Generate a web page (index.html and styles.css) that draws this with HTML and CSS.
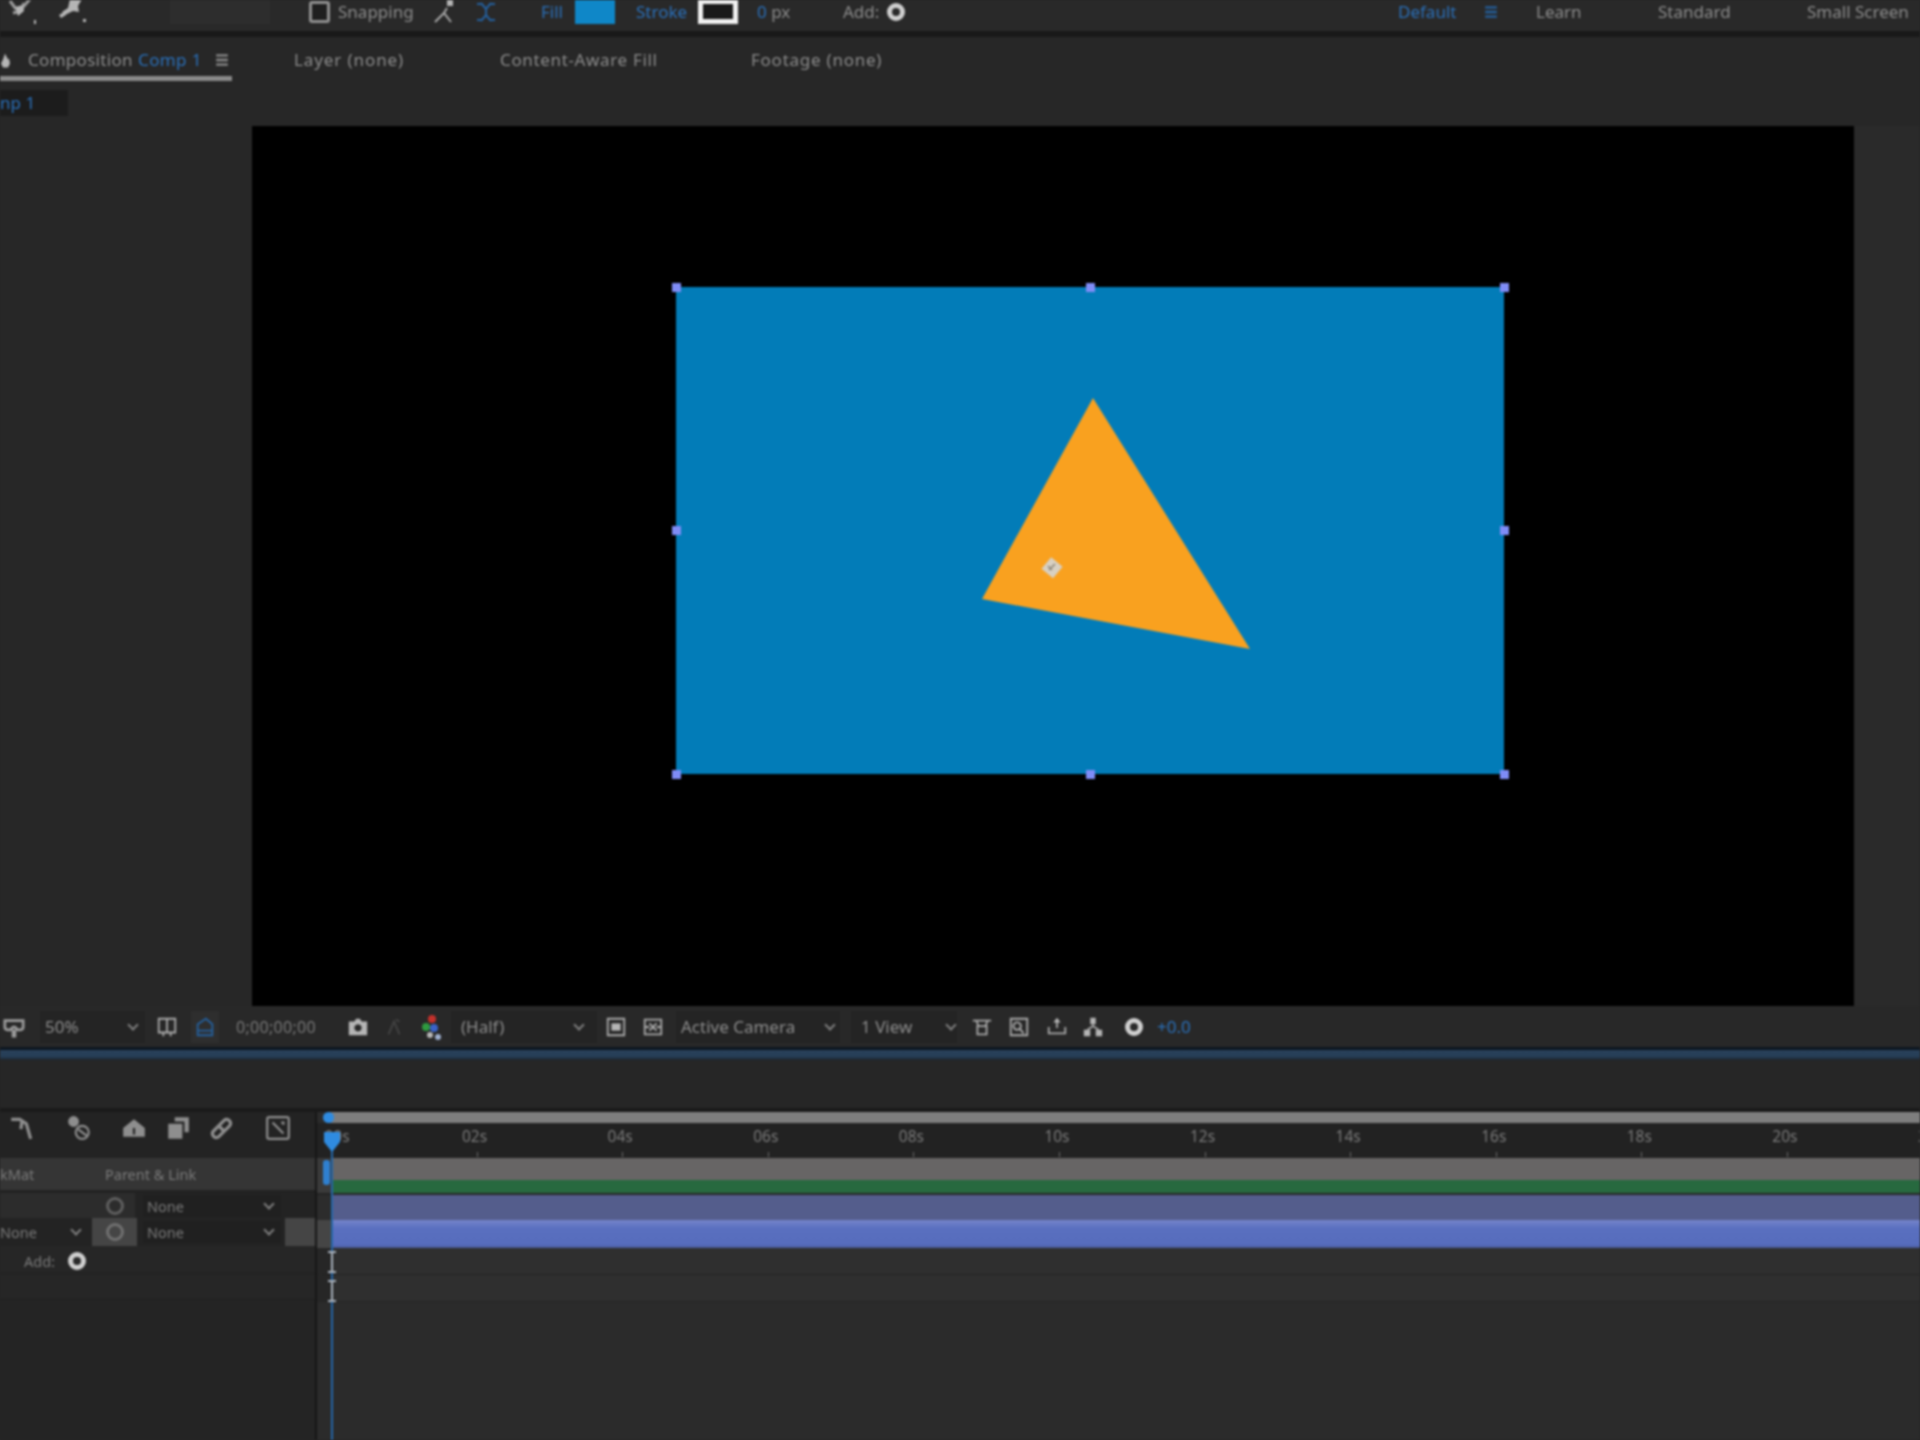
FILE: index.html
```html
<!DOCTYPE html>
<html lang="en">
<head>
<meta charset="utf-8">
<title>Composition Comp 1</title>
<link rel="stylesheet" href="styles.css">
</head>
<body>
<div class="app">
  <header class="toolbar">
    <svg class="ic tb-pen" viewBox="0 0 30 30"><path class="thick" d="M4 2l6 8M7 14l8-2 3-8M12 14L24 0"/><path class="solid" d="M9 8l8-2 1 6-6 5zM28 21h4v4h-4z"/></svg>
    <svg class="ic tb-pin" viewBox="0 0 30 30"><path class="solid" d="M14 0h12l-4 7 1 6-6-1-8 4-3-3 6-4zM3 16l5-3 2 3-5 3zM27 20h3v3h-3z"/></svg>
    <div class="tb-dim"></div>
    <span class="check"></span>
    <span class="t tb-snap">Snapping</span>
    <svg class="ic tb-snap1" viewBox="0 0 24 24"><path d="M3 22l9-9 7 9M12 13l3-5"/><path class="solid" d="M15 0h6v6h-6z"/></svg>
    <svg class="ic blue tb-snap2" viewBox="0 0 24 24"><path d="M7 3l5 6 5-6M7 21l5-6 5 6M12 9v6M3 4h5M16 4h5M3 20h5M16 20h5"/></svg>
    <span class="t blue-t tb-fill">Fill</span>
    <span class="swatch-fill"></span>
    <span class="t blue-t tb-stroke">Stroke</span>
    <span class="swatch-stroke"></span>
    <span class="t tb-px"><span class="blue-t">0</span> px</span>
    <span class="t tb-add">Add:</span>
    <span class="gear tb-gear"></span>
    <span class="t blue-t tb-default">Default</span>
    <svg class="ic blue tb-menu" viewBox="0 0 12 12"><path d="M1 2h10M1 6h10M1 10h10"/></svg>
    <span class="t tb-learn">Learn</span>
    <span class="t tb-standard">Standard</span>
    <span class="t tb-small">Small Screen</span>
  </header>
  <div class="toolbar-edge"></div>

  <section class="panel-head">
    <nav class="tabs">
      <div class="tab tab-active">
        <svg class="flame" viewBox="0 0 10 14"><path d="M4 0l3 6 1-1 1 5-2 4H2L0 10l2-4z"/></svg>
        <span class="t tab-comp">Composition</span>
        <span class="t blue-t tab-name">Comp 1</span>
        <svg class="ic tab-menu" viewBox="0 0 12 12"><path d="M1 2h10M1 6h10M1 10h10"/></svg>
      </div>
      <span class="t tab tab-layer">Layer (none)</span>
      <span class="t tab tab-fill">Content-Aware Fill</span>
      <span class="t tab tab-footage">Footage (none)</span>
    </nav>
    <div class="subtab"><span class="t blue-t">np 1</span></div>
  </section>

  <section class="stage">
    <div class="stage-side stage-left"></div>
    <svg class="canvas" viewBox="0 0 1602 880">
      <rect class="solid-blue" x="424" y="161" width="828" height="487"/>
      <polygon class="tri" points="841,272 730,473 998,523"/>
      <rect class="anchor" x="793" y="434" width="15" height="15" transform="rotate(40 800 441)"/>
      <path class="anchor-mark" d="M797 444l6-6M796 440l4 4"/>
      <g class="handles">
        <rect x="420" y="157" width="9" height="9"/><rect x="834" y="157" width="9" height="9"/><rect x="1248" y="157" width="9" height="9"/>
        <rect x="420" y="400" width="9" height="9"/><rect x="1248" y="400" width="9" height="9"/>
        <rect x="420" y="644" width="9" height="9"/><rect x="834" y="644" width="9" height="9"/><rect x="1248" y="644" width="9" height="9"/>
      </g>
    </svg>
    <div class="stage-side stage-right"></div>
  </section>

  <section class="viewer-bar">
    <svg class="ic vb-mask" viewBox="0 0 24 24"><path class="thick" d="M2 5h20v7c0 2-1 3-3 3h-3l-3-3h-2l-3 3H5c-2 0-3-1-3-3zM11 15v7h2v-7"/></svg>
    <div class="drop vb-zoom"><span class="t">50%</span><i class="chev"></i></div>
    <svg class="ic vb-safe" viewBox="0 0 24 24"><path d="M3 3h18v15H3zM12 3v15M8 18v4M16 18v4"/></svg>
    <div class="vb-blue-wrap"><svg class="ic blue" viewBox="0 0 24 24"><path d="M4 21V9l9-6 7 6v12zM4 16h16"/></svg></div>
    <span class="t vb-time">0;00;00;00</span>
    <svg class="ic vb-cam" viewBox="0 0 24 24"><path class="solid" d="M2 6h6l2-3h4l2 3h6v15H2zM12 9a4 4 0 1 0 .01 0z"/></svg>
    <svg class="ic dim vb-snapshot" viewBox="0 0 24 24"><path d="M6 20l6-14 6 14M14 4l4 2"/></svg>
    <svg class="vb-rgb" viewBox="0 0 22 28"><circle cx="11" cy="6" r="4" fill="#c2312b"/><circle cx="5" cy="14" r="4" fill="#2f9a3f"/><circle cx="13" cy="15" r="4" fill="#3a62c8"/><circle cx="17" cy="24" r="3" fill="#9fb0d0"/><circle cx="9" cy="22" r="3" fill="#b7b7b7"/></svg>
    <div class="drop vb-half"><span class="t">(Half)</span><i class="chev"></i></div>
    <svg class="ic vb-i1" viewBox="0 0 24 24"><path d="M3 3h18v18H3z"/><path class="solid" d="M7 8h10v8H7z"/></svg>
    <svg class="ic vb-i2" viewBox="0 0 24 24"><path d="M3 4h18v16H3zM8 8l8 8M16 8l-8 8M3 12h5M16 12h5"/></svg>
    <div class="drop vb-cam-drop"><span class="t">Active Camera</span><i class="chev"></i></div>
    <div class="drop vb-view"><span class="t">1 View</span><i class="chev"></i></div>
    <svg class="ic vb-i3" viewBox="0 0 24 24"><path d="M2 5h20M6 5l2 6M18 5l-2 6M7 11h10v9H7z"/></svg>
    <svg class="ic vb-i4" viewBox="0 0 24 24"><path d="M3 3h18v18H3zM10 7a4 4 0 1 0 .01 0zM13 14l4 5"/></svg>
    <svg class="ic vb-i5" viewBox="0 0 24 24"><path d="M3 12v7h18v-7M12 4v9"/><path class="solid" d="M8 7l4-5 4 5z"/></svg>
    <svg class="ic vb-i6" viewBox="0 0 24 24"><path class="solid" d="M9 2h6v7H9zM2 15h7v7H2zM15 15h7v7h-7z"/><path d="M12 9v3M6 15l6-4 6 4"/></svg>
    <span class="gear vb-gear"></span>
    <span class="t blue-t vb-exposure">+0.0</span>
  </section>

  <div class="divider"></div>
  <div class="timeline-top"></div>
  <div class="timeline-edge"></div>

  <section class="timeline">
    <aside class="layers">
      <div class="tools">
        <svg class="ic tl-1" viewBox="0 0 24 24"><path class="thick" d="M2 4h8l6 4 4 14M12 5l-1 8"/></svg>
        <svg class="ic tl-2" viewBox="0 0 24 24"><circle class="filled" cx="7" cy="6" r="4"/><circle cx="15" cy="16" r="6"/><path d="M11 13l8 6"/></svg>
        <svg class="ic tl-3" viewBox="0 0 24 24"><path class="solid" d="M2 20V12L12 4l10 8v8zM11 12v6h2v-6z"/></svg>
        <svg class="ic tl-4" viewBox="0 0 24 24"><path class="solid" d="M9 2h13v14h-4V6H9zM3 8h13v14H3z"/></svg>
        <svg class="ic tl-5" viewBox="0 0 24 24"><path class="thick" d="M4 15L14 5c3-3 8 2 5 5L9 20c-3 3-8-2-5-5zM9 10l5 5"/></svg>
        <svg class="ic tl-6" viewBox="0 0 24 24"><path d="M4 2h16q2 0 2 2v16q0 2-2 2H4q-2 0-2-2V4q0-2 2-2zM7 7l10 10M15 7h2v2"/></svg>
      </div>
      <div class="col-head">
        <span class="t small col-mat">kMat</span>
        <span class="t small col-parent">Parent &amp; Link</span>
      </div>
      <div class="layer-row row-one">
        <span class="pick-cell"><span class="pick"></span></span>
        <div class="mini-drop"><span class="t small">None</span><i class="chev"></i></div>
      </div>
      <div class="layer-row row-two">
        <div class="matte-cell"><span class="t small">None</span><i class="chev"></i></div>
        <span class="pick-cell pick-on"><span class="pick"></span></span>
        <div class="mini-drop"><span class="t small">None</span><i class="chev"></i></div>
      </div>
      <div class="add-row"><span class="t small add-label">Add:</span><span class="gear add-gear"></span></div>
      <div class="empty-row"></div>
      <div class="layers-rest"></div>
    </aside>

    <div class="tracks">
      <div class="nav-bar"></div>
      <div class="ruler">
        <div class="tick tick-first"><span>00s</span></div>
        <div class="tick"><span>02s</span></div>
        <div class="tick"><span>04s</span></div>
        <div class="tick"><span>06s</span></div>
        <div class="tick"><span>08s</span></div>
        <div class="tick"><span>10s</span></div>
        <div class="tick"><span>12s</span></div>
        <div class="tick"><span>14s</span></div>
        <div class="tick"><span>16s</span></div>
        <div class="tick"><span>18s</span></div>
        <div class="tick"><span>20s</span></div>
        <div class="tick"><span>22s</span></div>
      </div>
      <div class="track work"></div>
      <div class="track green"></div>
      <div class="track gap"></div>
      <div class="track shape-dim"></div>
      <div class="track shape-on"></div>
      <div class="track prop"></div>
      <div class="track prop"></div>
      <div class="track-rest"></div>

      <i class="nav-dot"></i>
      <i class="work-handle"></i>
      <i class="playhead-line"></i>
      <svg class="playhead" viewBox="0 0 18 22"><path d="M1 1h16v10l-8 10-8-10z"/></svg>
      <svg class="beam beam-a" viewBox="0 0 8 22"><path d="M0 1h8M0 21h8M4 1v20"/></svg>
      <svg class="beam beam-b" viewBox="0 0 8 22"><path d="M0 1h8M0 21h8M4 1v20"/></svg>
    </div>
  </section>
</div>
</body>
</html>
```

FILE: styles.css
```css
* { box-sizing: border-box; }
html, body { margin: 0; padding: 0; background: #262626; }
body { width: 1920px; height: 1440px; overflow: hidden; }

.app {
  width: 1920px;
  height: 1440px;
  display: flex;
  flex-direction: column;
  overflow: hidden;
  filter: blur(1.1px);
  font-family: "Noto Sans", "Open Sans", sans-serif;
  background: #272727;
}

.t { font-size: 17px; line-height: 20px; color: #8c8c8c; white-space: nowrap; flex: none; display: block; }
.t.small { font-size: 14.5px; color: #7a7a7a; }
.blue-t { color: #2a70ba; }
.t.blue-t { color: #2a70ba; }

.ic { flex: none; width: 24px; height: 24px; fill: none; stroke: #a8a8a8; stroke-width: 2; }
.ic .solid { fill: #b5b5b5; stroke: none; }
.ic .thick { stroke-width: 3; stroke: #9a9a9a; }
.ic .filled { fill: #8e8e8e; }
.ic.blue { stroke: #245f9c; }
.ic.dim { stroke: #444; }

.gear { flex: none; display: block; width: 18px; height: 18px; border-radius: 50%; border: 5px solid #cfcfcf; background: #2a2a2a; }

/* Top toolbar */
.toolbar { height: 31px; flex: none; display: flex; align-items: center; padding-bottom: 8px; background: #292929; overflow: hidden; }
.toolbar-edge { height: 6px; flex: none; background: #191919; }
.tb-pen { margin-left: 6px; width: 30px; height: 30px; margin-top: 4px; }
.tb-pin { margin-left: 20px; width: 30px; height: 30px; margin-top: 4px; }
.tb-dim { width: 100px; height: 25px; margin-left: 84px; background: #2d2d2d; flex: none; }
.check { width: 21px; height: 22px; margin-left: 39px; border: 3px solid #8f8f8f; border-radius: 3px; flex: none; background: #1f1f1f; }
.tb-snap { margin-left: 8px; width: 82px; }
.tb-snap1 { margin-left: 12px; }
.tb-snap2 { margin-left: 18px; }
.tb-fill { margin-left: 43px; width: 34px; }
.swatch-fill { width: 40px; height: 25px; background: #0f87c8; flex: none; }
.tb-stroke { margin-left: 21px; width: 62px; }
.swatch-stroke { width: 40px; height: 25px; border: 5px solid #f1f1f1; background: #191919; flex: none; }
.tb-px { margin-left: 19px; width: 40px; }
.tb-add { margin-left: 46px; width: 44px; }
.tb-gear { margin-left: 0; }
.tb-default { margin-left: 493px; width: 62px; }
.tb-menu { width: 14px; height: 14px; margin-left: 24px; }
.tb-learn { margin-left: 38px; width: 50px; }
.tb-standard { margin-left: 72px; width: 80px; }
.tb-small { margin-left: 69px; width: 113px; }

/* Panel tabs */
.panel-head { height: 89px; flex: none; background: #272727; }
.tabs { display: flex; align-items: flex-start; height: 44px; }
.tab { height: 44px; line-height: 46px; flex: none; }
.tab-active { width: 232px; display: flex; align-items: center; height: 44px; border-bottom: 5px solid #8a8a8a; padding-top: 7px; }
.flame { width: 10px; height: 15px; margin-left: 1px; fill: #b5b5b5; flex: none; }
.tab-comp { margin-left: 17px; width: 110px; letter-spacing: .3px; }
.tab-name { width: 70px; letter-spacing: .4px; }
.tab-menu { width: 14px; height: 14px; margin-left: 7px; stroke: #8a8a8a; }
.tab-layer { margin-left: 62px; letter-spacing: .9px; width: 206px; }
.tab-fill { letter-spacing: .65px; width: 251px; }
.tab-footage { letter-spacing: .75px; }
.subtab { width: 68px; height: 26px; margin-top: 9px; background: #1c1c1c; display: flex; align-items: center; padding-left: 0; }

/* Composition viewer */
.stage { height: 880px; flex: none; display: flex; }
.stage-side { flex: none; background: #272727; }
.stage-left { width: 252px; }
.stage-right { width: 66px; background: #2a2a2a; }
.canvas { width: 1602px; height: 880px; flex: none; display: block; background: #000; }
.solid-blue { fill: #027cb8; }
.tri { fill: #f9a11f; }
.anchor { fill: #d8d0c2; }
.anchor-mark { fill: none; stroke: #8a8478; stroke-width: 1.5; }
.handles rect { fill: #7f8cf6; }

/* Viewer footer */
.viewer-bar { height: 41px; flex: none; display: flex; align-items: center; background: #282828; }
.viewer-bar .ic { width: 22px; height: 22px; }
.drop { flex: none; height: 32px; display: flex; align-items: center; justify-content: space-between; padding: 0 6px 0 5px; background: #242424; }
.chev { flex: none; display: block; width: 8px; height: 8px; margin-top: -4px; border-right: 2px solid #7c7c7c; border-bottom: 2px solid #7c7c7c; transform: rotate(45deg); }
.vb-mask { margin-left: 3px; }
.vb-zoom { width: 105px; margin-left: 15px; padding-right: 8px; }
.viewer-bar .vb-safe { margin-left: 11px; }
.vb-blue-wrap { width: 28px; height: 32px; margin-left: 13px; display: flex; align-items: center; justify-content: center; flex: none; background: #2e2e2e; }
.t.vb-time { margin-left: 17px; width: 99px; font-size: 16px; letter-spacing: .3px; color: #767676; }
.viewer-bar .vb-cam { margin-left: 12px; }
.viewer-bar .vb-snapshot { margin-left: 14px; }
.vb-rgb { width: 22px; height: 28px; margin-left: 16px; flex: none; }
.vb-half { width: 146px; margin-left: 8px; padding-left: 10px; padding-right: 14px; }
.viewer-bar .vb-i1 { margin-left: 8px; }
.viewer-bar .vb-i2 { margin-left: 15px; }
.vb-cam-drop { width: 164px; margin-left: 12px; }
.vb-view { width: 106px; margin-left: 11px; padding-left: 10px; padding-right: 2px; }
.viewer-bar .vb-i3 { margin-left: 14px; }
.viewer-bar .vb-i4 { margin-left: 15px; }
.viewer-bar .vb-i5 { margin-left: 16px; }
.viewer-bar .vb-i6 { margin-left: 14px; }
.vb-gear { margin-left: 21px; }
.vb-exposure { margin-left: 14px; width: 36px; }

.divider { height: 13px; flex: none; background: linear-gradient(#284059, #273f58 70%, #1f2d3c); border-top: 3px solid #0d1620; border-bottom: 1px solid #1e2730; }
.timeline-top { height: 48px; flex: none; background: #262626; }
.timeline-edge { height: 4px; flex: none; background: #1a1a1a; }

/* Timeline */
.timeline { flex: 1; min-height: 0; display: flex; }
.layers { width: 317px; flex: none; display: flex; flex-direction: column; background: #232323; border-right: 2px solid #161616; }
.tools { height: 46px; flex: none; display: flex; align-items: center; padding-bottom: 14px; }
.tools .ic { width: 26px; height: 26px; stroke: #8e8e8e; }
.tools .ic .solid { fill: #8e8e8e; }
.tools .ic .thick { stroke: #8e8e8e; }
.tl-1 { margin-left: 9px; }
.tl-2 { margin-left: 31px; }
.tl-3 { margin-left: 29px; }
.tl-4 { margin-left: 18px; }
.tl-5 { margin-left: 18px; }
.tl-6 { margin-left: 30px; }
.col-head { height: 35px; flex: none; display: flex; align-items: center; background: #353535; border-bottom: 3px solid #222; }
.col-mat { width: 105px; }
.layer-row { flex: none; display: flex; align-items: center; }
.row-one { height: 25px; padding-left: 92px; background: linear-gradient(to right, #2c2c2c 135px, #232323 135px); }
.row-two { height: 28px; background: linear-gradient(to right, #232323 285px, #454545 285px); }
.matte-cell { width: 92px; flex: none; display: flex; align-items: center; }
.matte-cell .t { width: 72px; }
.pick-cell { width: 45px; height: 100%; flex: none; display: flex; align-items: center; justify-content: center; }
.pick-on { background: #454545; }
.pick { display: block; width: 18px; height: 18px; border-radius: 50%; border: 3px solid #5e5e5e; }
.pick-on .pick { border-color: #707070; }
.mini-drop { width: 138px; height: 22px; margin-left: 6px; flex: none; display: flex; align-items: center; justify-content: space-between; padding: 0 8px 0 4px; background: #202020; }
.add-row { height: 27px; flex: none; display: flex; align-items: center; padding-top: 2px; background: #262626; }
.add-label { margin-left: 24px; width: 44px; }
.add-gear { width: 18px; height: 18px; margin-left: 0; }
.empty-row { height: 27px; flex: none; background: #262626; border-top: 1px solid #202020; border-bottom: 1px solid #1f1f1f; }
.layers-rest { flex: 1; background: #242424; }

.tracks { flex: 1; min-width: 0; display: flex; flex-direction: column; position: relative; overflow: hidden; background: #2b2b2b; }
.nav-bar { height: 11px; flex: none; margin-left: 12px; background: #7e7e7e; }
.ruler { height: 35px; flex: none; display: flex; padding-left: 14px; background: #222; overflow: hidden; }
.tick { width: 145.6px; flex: none; position: relative; font-size: 15.5px; color: #7a7a7a; line-height: 20px; padding-top: 3px; }
.tick span { display: inline-block; transform: translateX(calc(-50% - 2px)); }
.tick-first span { transform: translateX(calc(-50% + 6px)); }
.tick::after { content: ""; position: absolute; left: 0; bottom: 1px; width: 1px; height: 5px; background: #6a6a6a; }
.track { flex: none; border-left: 14px solid #2c2c2c; }
.work { height: 22px; background: #676565; border-left-color: #3a3a3a; }
.green { height: 13px; background: #27693f; border-left-color: #3a3a3a; }
.gap { height: 2px; background: #262626; border-left-color: #232323; }
.shape-dim { height: 25px; background: #545d8c; }
.shape-on { height: 28px; background: linear-gradient(#7584ca, #5a70c0 30%, #566cbc 90%, #46568f); border-left-color: #454545; }
.prop { height: 27px; background: #2f2f2f; border-bottom: 1px solid #242424; border-left-color: #262626; }
.track-rest { flex: 1; background: #2b2b2b; }

.nav-dot { position: absolute; left: 6px; top: 0; width: 11px; height: 11px; border-radius: 50%; background: #2f8be0; }
.work-handle { position: absolute; left: 6px; top: 48px; width: 7px; height: 25px; border-radius: 3px; background: #2f80d0; }
.playhead-line { position: absolute; left: 14px; top: 30px; bottom: 0; width: 2px; background: #2466a8; }
.playhead { position: absolute; left: 6px; top: 19px; width: 18px; height: 22px; fill: #2f8be0; }
.beam { position: absolute; left: 11px; width: 8px; height: 22px; fill: none; stroke: #a9b2bd; stroke-width: 2; }
.beam-a { top: 139px; }
.beam-b { top: 168px; }
```
